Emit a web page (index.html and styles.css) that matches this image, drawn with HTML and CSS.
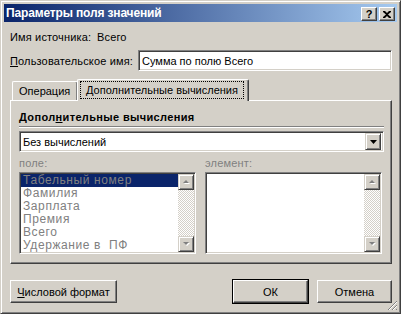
FILE: index.html
```html
<!DOCTYPE html>
<html lang="ru">
<head>
<meta charset="utf-8">
<title>Параметры поля значений</title>
<link rel="stylesheet" href="styles.css">
</head>
<body>
<div class="window">
  <div class="titlebar">
    <span class="title">Параметры поля значений</span>
    <div class="tbtns">
      <span class="tbtn help">?</span>
      <span class="tbtn close"><svg width="8" height="7" viewBox="0 0 8 7"><path d="M0 0h2l2 2 2-2h2v1L5 3.5 8 6v1H6L4 5 2 7H0V6l3-2.5L0 1z" fill="#000"/></svg></span>
    </div>
  </div>
  <div class="content">
    <div class="row src">
      <span class="lbl-src">Имя источника:</span>
      <span>Всего</span>
    </div>
    <div class="row name">
      <span class="lbl-name"><u>П</u>ользовательское имя:</span>
      <div class="field">Сумма по полю Всего</div>
    </div>
    <div class="tabs">
      <div class="tab">Операция</div>
      <div class="tab active"><span class="focus">Дополнительные вычисления</span></div>
    </div>
    <div class="panel">
      <div class="heading">Допол<u>н</u>ительные вычисления</div>
      <div class="sep"></div>
      <div class="combo">
        <span class="combo-text">Без вычислений</span>
        <span class="dd"><svg width="7" height="4" viewBox="0 0 7 4"><path d="M0 0h7L3.5 4z" fill="#000"/></svg></span>
      </div>
      <div class="lists">
        <div class="col">
          <div class="dlabel">поле:</div>
          <div class="listbox">
            <ul class="items">
              <li class="sel">Табельный номер</li>
              <li>Фамилия</li>
              <li>Зарплата</li>
              <li>Премия</li>
              <li>Всего</li>
              <li>Удержание в&nbsp; ПФ</li>
            </ul>
            <div class="sbar">
              <span class="sbtn"><svg width="7" height="5" viewBox="0 0 7 5"><path d="M1 4h6L4 1z" fill="#fff"/><path d="M0 3h6L3 0z" fill="#808080"/></svg></span>
              <span class="track"></span>
              <span class="sbtn"><svg width="7" height="5" viewBox="0 0 7 5"><path d="M1 1h6L4 4z" fill="#fff"/><path d="M0 0h6L3 3z" fill="#808080"/></svg></span>
            </div>
          </div>
        </div>
        <div class="col">
          <div class="dlabel">элемент:</div>
          <div class="listbox">
            <ul class="items"></ul>
            <div class="sbar">
              <span class="sbtn"><svg width="7" height="5" viewBox="0 0 7 5"><path d="M1 4h6L4 1z" fill="#fff"/><path d="M0 3h6L3 0z" fill="#808080"/></svg></span>
              <span class="track"></span>
              <span class="sbtn"><svg width="7" height="5" viewBox="0 0 7 5"><path d="M1 1h6L4 4z" fill="#fff"/><path d="M0 0h6L3 3z" fill="#808080"/></svg></span>
            </div>
          </div>
        </div>
      </div>
    </div>
    <div class="buttons">
      <div class="btn wide"><u>Ч</u>исловой формат</div>
      <div class="spacer"></div>
      <div class="btn default">ОК</div>
      <div class="btn">Отмена</div>
    </div>
  </div>
  <svg class="grip" width="11" height="11" viewBox="0 0 11 11">
    <path d="M10 1L1 10M10 5L5 10M10 9L9 10" stroke="#808080" stroke-width="1"/>
    <path d="M10 2L2 10M10 6L6 10" stroke="#fff" stroke-width="1"/>
  </svg>
</div>
</body>
</html>
```
FILE: styles.css
```css
html, body {
  margin: 0;
  padding: 0;
  background: #d4d0c8;
}
body {
  font-family: "Liberation Sans", Arial, sans-serif;
  font-size: 11px;
  color: #000;
}
u { text-decoration: underline; text-underline-offset: 1px; }

.window {
  position: relative;
  width: 401px;
  height: 314px;
  box-sizing: border-box;
  border: 1px solid;
  border-color: #d4d0c8 #404040 #404040 #d4d0c8;
  box-shadow: inset 1px 1px #fff, inset -1px -1px #808080;
  padding: 3px;
  background: #d4d0c8;
  display: flex;
  flex-direction: column;
}

.titlebar {
  height: 18px;
  background: linear-gradient(to right, #0a246a, #a6caf0);
  display: flex;
  align-items: center;
  padding: 0 2px 0 2px;
}
.title {
  color: #fff;
  font-weight: bold;
  font-size: 12px;
  flex: 1;
  letter-spacing: -0.15px;
}
.tbtns { display: flex; gap: 2px; padding-top: 2px; }
.tbtn {
  width: 14px;
  height: 12px;
  background: #d4d0c8;
  border: 1px solid;
  border-color: #fff #404040 #404040 #fff;
  box-shadow: inset -1px -1px #808080;
  display: flex;
  align-items: center;
  justify-content: center;
  font-weight: bold;
  font-size: 11px;
  line-height: 12px;
}

.content {
  flex: 1;
  display: flex;
  flex-direction: column;
  padding: 0 5px 0 6px;
}
.row { display: flex; align-items: center; letter-spacing: 0.15px; }
.src { margin-top: 8px; height: 14px; }
.lbl-src { width: 87px; }
.name { margin-top: 6px; height: 21px; }
.lbl-name { width: 128px; }
.field {
  flex: 1;
  height: 21px;
  box-sizing: border-box;
  background: #fff;
  border: 1px solid;
  border-color: #808080 #fff #fff #808080;
  box-shadow: inset 1px 1px #404040, inset -1px -1px #d4d0c8;
  padding: 0 3px;
  display: flex;
  align-items: center;
  letter-spacing: 0;
}

.tabs {
  margin-top: 8px;
  height: 21px;
  display: flex;
  align-items: flex-end;
  padding-left: 2px;
  position: relative;
  z-index: 1;
}
.tab {
  box-sizing: border-box;
  height: 19px;
  border: 1px solid;
  border-color: #fff #404040 transparent #fff;
  border-bottom: 0;
  box-shadow: inset -1px 0 #808080;
  border-radius: 2px 2px 0 0;
  background: #d4d0c8;
  display: flex;
  align-items: center;
  padding: 0 6px;
  width: 66px;
}
.tab.active {
  height: 22px;
  margin-bottom: -1px;
  margin-left: -1px;
  width: 172px;
  padding: 0 3px 2px 3px;
}
.focus {
  outline: 1px dotted #000;
  outline-offset: 0;
  padding: 2px 5px 2px 5px;
  line-height: 12px;
}

.panel {
  height: 164px;
  box-sizing: border-box;
  border: 1px solid;
  border-color: #fff #404040 #404040 #fff;
  box-shadow: inset -1px -1px #808080;
  padding: 9px 7px 0 8px;
}
.heading {
  font-weight: bold;
  height: 14px;
  line-height: 14px;
  letter-spacing: 0.35px;
}
.sep {
  margin-top: 2px;
  height: 0;
  border-top: 1px solid #808080;
  border-bottom: 1px solid #fff;
}
.combo {
  margin-top: 3px;
  height: 21px;
  box-sizing: border-box;
  background: #fff;
  border: 1px solid;
  border-color: #808080 #fff #fff #808080;
  box-shadow: inset 1px 1px #404040, inset -1px -1px #d4d0c8;
  padding: 2px;
  display: flex;
  align-items: center;
}
.combo-text { flex: 1; padding-left: 1px; }
.dd {
  width: 16px;
  height: 17px;
  box-sizing: border-box;
  background: #d4d0c8;
  border: 1px solid;
  border-color: #d4d0c8 #404040 #404040 #d4d0c8;
  box-shadow: inset 1px 1px #fff, inset -1px -1px #808080;
  display: flex;
  align-items: center;
  justify-content: center;
}

.lists {
  display: grid;
  grid-template-columns: 177px 177px;
  column-gap: 9px;
  margin-top: 4px;
}
.dlabel {
  height: 14px;
  line-height: 14px;
  color: #808080;
  font-size: 11px;
  letter-spacing: 0.2px;
  margin-bottom: 2px;
}
.listbox {
  height: 82px;
  box-sizing: border-box;
  background: #fff;
  border: 1px solid;
  border-color: #808080 #fff #fff #808080;
  box-shadow: inset 1px 1px #404040, inset -1px -1px #d4d0c8;
  padding: 1px;
  display: flex;
}
.items {
  list-style: none;
  margin: 0;
  padding: 0;
  flex: 1;
  font-size: 12px;
  letter-spacing: 0.6px;
  color: #808080;
}
.items li {
  height: 13px;
  line-height: 13px;
  padding-left: 2px;
  white-space: pre;
}
.items li.sel { background: #0a246a; }
.sbar {
  width: 16px;
  display: flex;
  flex-direction: column;
  background: repeating-conic-gradient(#fff 0 25%, #d4d0c8 0 50%) 0 0 / 2px 2px;
}
.sbtn {
  width: 16px;
  height: 16px;
  box-sizing: border-box;
  background: #d4d0c8;
  border: 1px solid;
  border-color: #d4d0c8 #404040 #404040 #d4d0c8;
  box-shadow: inset 1px 1px #fff, inset -1px -1px #808080;
  display: flex;
  align-items: center;
  justify-content: center;
}
.track { flex: 1; }

.buttons {
  margin-top: 16px;
  display: flex;
  gap: 9px;
}
.spacer { flex: 1; }
.btn {
  width: 75px;
  height: 23px;
  box-sizing: border-box;
  border: 1px solid;
  border-color: #fff #404040 #404040 #fff;
  box-shadow: inset -1px -1px #808080;
  display: flex;
  align-items: center;
  justify-content: center;
}
.btn.wide { width: 107px; }
.btn.default {
  outline: 1px solid #000;
  outline-offset: 0;
}

.grip {
  position: absolute;
  right: 2px;
  bottom: 2px;
}
```
